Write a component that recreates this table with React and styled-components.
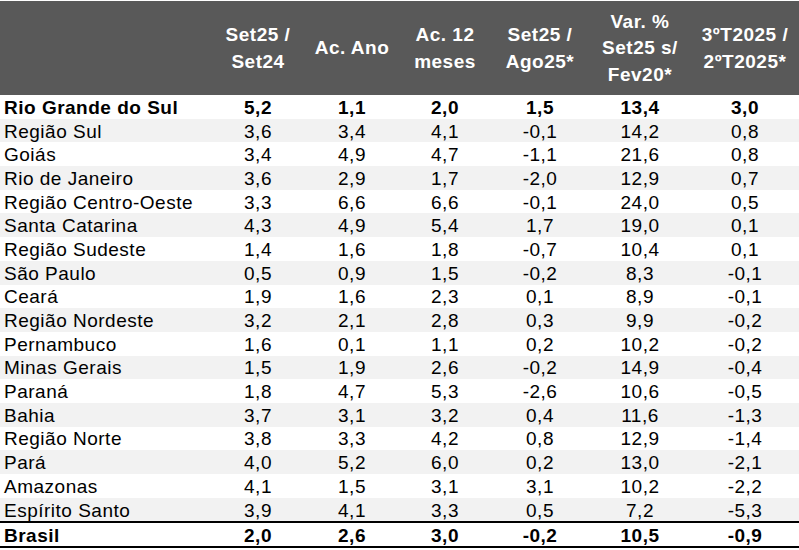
import React from "react";
import styled, { createGlobalStyle } from "styled-components";

const GlobalStyle = createGlobalStyle`
  html, body {
    margin: 0;
    padding: 0;
    background: #ffffff;
  }
  body {
    font-family: "Liberation Sans", Arial, sans-serif;
    color: #000000;
  }
`;

const headers = [
  ["Set25 /", "Set24"],
  ["Ac. Ano"],
  ["Ac. 12", "meses"],
  ["Set25 /", "Ago25*"],
  ["Var. %", "Set25 s/", "Fev20*"],
  ["3ºT2025 /", "2ºT2025*"],
];

const rows = [
  ["Rio Grande do Sul", "5,2", "1,1", "2,0", "1,5", "13,4", "3,0"],
  ["Região Sul", "3,6", "3,4", "4,1", "-0,1", "14,2", "0,8"],
  ["Goiás", "3,4", "4,9", "4,7", "-1,1", "21,6", "0,8"],
  ["Rio de Janeiro", "3,6", "2,9", "1,7", "-2,0", "12,9", "0,7"],
  ["Região Centro-Oeste", "3,3", "6,6", "6,6", "-0,1", "24,0", "0,5"],
  ["Santa Catarina", "4,3", "4,9", "5,4", "1,7", "19,0", "0,1"],
  ["Região Sudeste", "1,4", "1,6", "1,8", "-0,7", "10,4", "0,1"],
  ["São Paulo", "0,5", "0,9", "1,5", "-0,2", "8,3", "-0,1"],
  ["Ceará", "1,9", "1,6", "2,3", "0,1", "8,9", "-0,1"],
  ["Região Nordeste", "3,2", "2,1", "2,8", "0,3", "9,9", "-0,2"],
  ["Pernambuco", "1,6", "0,1", "1,1", "0,2", "10,2", "-0,2"],
  ["Minas Gerais", "1,5", "1,9", "2,6", "-0,2", "14,9", "-0,4"],
  ["Paraná", "1,8", "4,7", "5,3", "-2,6", "10,6", "-0,5"],
  ["Bahia", "3,7", "3,1", "3,2", "0,4", "11,6", "-1,3"],
  ["Região Norte", "3,8", "3,3", "4,2", "0,8", "12,9", "-1,4"],
  ["Pará", "4,0", "5,2", "6,0", "0,2", "13,0", "-2,1"],
  ["Amazonas", "4,1", "1,5", "3,1", "3,1", "10,2", "-2,2"],
  ["Espírito Santo", "3,9", "4,1", "3,3", "0,5", "7,2", "-5,3"],
];

const total = ["Brasil", "2,0", "2,6", "3,0", "-0,2", "10,5", "-0,9"];

const columns = "211px 94px 94px 92px 98px 102px 108px";

function App() {
  return (
    <>
      <GlobalStyle />
      <Table>
        <HeaderRow>
          <HeaderCell />
          {headers.map((lines, i) => (
            <HeaderCell key={i}>
              {lines.map((l, j) => (
                <span key={j}>{l}</span>
              ))}
            </HeaderCell>
          ))}
        </HeaderRow>
        {rows.map((r, i) => (
          <Row key={r[0]} $striped={i % 2 === 1} $bold={i === 0}>
            <Name>{r[0]}</Name>
            {r.slice(1).map((v, j) => (
              <Value key={j}>{v}</Value>
            ))}
          </Row>
        ))}
        <TotalRow $bold>
          <Name>{total[0]}</Name>
          {total.slice(1).map((v, j) => (
            <Value key={j}>{v}</Value>
          ))}
        </TotalRow>
      </Table>
    </>
  );
}

const Table = styled.div`
  width: 799px;
  padding-top: 1px;
  display: flex;
  flex-direction: column;
`;

const HeaderRow = styled.div`
  display: grid;
  grid-template-columns: ${columns};
  height: 94px;
  background: #595959;
`;

const HeaderCell = styled.div`
  display: flex;
  flex-direction: column;
  align-items: center;
  justify-content: center;
  padding-top: 1px;
  color: #ffffff;
  font-weight: bold;
  font-size: 19px;
  letter-spacing: 0.5px;
  line-height: 26.5px;
  white-space: nowrap;
`;

const Row = styled.div`
  display: grid;
  grid-template-columns: ${columns};
  align-items: center;
  box-sizing: border-box;
  height: 23.7px;
  padding-top: 2px;
  background: ${(p) => (p.$striped ? "#f2f2f2" : "#ffffff")};
  font-size: 19px;
  line-height: 20px;
  letter-spacing: 0.5px;
  font-weight: ${(p) => (p.$bold ? "bold" : "normal")};
  white-space: nowrap;
`;

const TotalRow = styled(Row)`
  height: 27px;
  border-top: 2px solid #000000;
  border-bottom: 2px solid #000000;
`;

const Name = styled.div`
  padding-left: 4px;
`;

const Value = styled.div`
  text-align: center;
`;

export default App;
